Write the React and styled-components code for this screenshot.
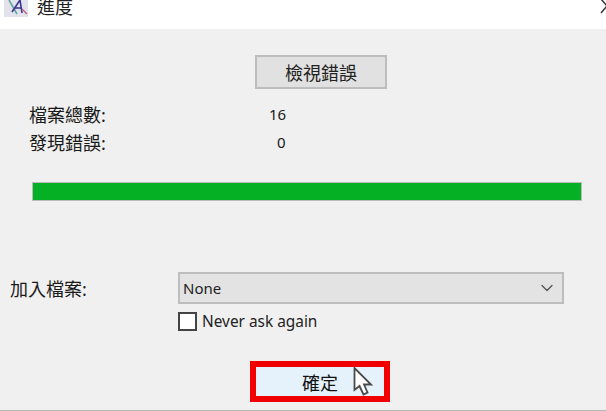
import styled, { createGlobalStyle } from "styled-components";
import { ChevronDown } from "lucide-react";

const GlobalStyle = createGlobalStyle`
  html, body {
    margin: 0;
    padding: 0;
    background: #f0f0f0;
  }
  * {
    box-sizing: border-box;
  }
`;

const stats = [
  { label: "檔案總數:", value: "16", offset: 0 },
  { label: "發現錯誤:", value: "0", offset: 8 },
];

export default function App() {
  return (
    <Dialog>
      <GlobalStyle />
      <TitleBar>
        <AppIcon viewBox="0 0 24 18">
          <rect x="0" y="0" width="24" height="17" fill="#e2e2ec" />
          <path d="M5 0 L13 14" stroke="#5fa898" strokeWidth="1.6" fill="none" />
          <path d="M8 12 L16 0 L18 13 M11 8 L18 8" stroke="#3a3490" strokeWidth="1.6" fill="none" />
          <path d="M18 9 L23 14" stroke="#c0607f" strokeWidth="1.4" fill="none" />
        </AppIcon>
        <Title>進度</Title>
        <CloseIcon viewBox="0 0 6 14">
          <path d="M1 -1 L7 6 L1 13" stroke="#333" strokeWidth="1.5" fill="none" />
        </CloseIcon>
      </TitleBar>

      <Content>
        <ErrorButton>檢視錯誤</ErrorButton>

        <Stats>
          {stats.map((s) => (
            <StatRow key={s.label}>
              <StatLabel>{s.label}</StatLabel>
              <StatValue $offset={s.offset}>{s.value}</StatValue>
            </StatRow>
          ))}
        </Stats>

        <Progress>
          <ProgressFill />
        </Progress>

        <FileRow>
          <FileLabel>加入檔案:</FileLabel>
          <Select>
            <span>None</span>
            <ChevronDown size={20} strokeWidth={1.6} color="#555" />
          </Select>
        </FileRow>

        <CheckRow>
          <CheckBox />
          <CheckLabel>Never ask again</CheckLabel>
        </CheckRow>

        <Footer>
          <Highlight>
            <OkButton>確定</OkButton>
            <Cursor viewBox="0 0 20 29">
              <path
                d="M1.5 1 L1.5 23 L6.5 19 L10.5 27.5 L14.5 25.5 L11 17.5 L18 17.5 Z"
                fill="#fff"
                stroke="#4a4a4a"
                strokeWidth="1.8"
              />
            </Cursor>
          </Highlight>
        </Footer>
      </Content>
      <BottomEdge />
    </Dialog>
  );
}

const Dialog = styled.div`
  width: 606px;
  height: 411px;
  overflow: hidden;
  position: relative;
  background: #f0f0f0;
  color: #1a1a1a;
  font-family: "Noto Sans", "Noto Sans CJK TC", sans-serif;
`;

const TitleBar = styled.div`
  height: 29px;
  background: #fff;
  display: flex;
  align-items: flex-start;
  padding-left: 4px;
`;

const AppIcon = styled.svg`
  width: 24px;
  height: 18px;
  flex: none;
`;

const Title = styled.div`
  margin-left: 9px;
  font-size: 18px;
  line-height: 15px;
  color: #222;
`;

const CloseIcon = styled.svg`
  width: 6px;
  height: 14px;
  margin-left: auto;
  flex: none;
`;

const Content = styled.div`
  display: flex;
  flex-direction: column;
  padding-top: 26px;
`;

const ErrorButton = styled.button`
  align-self: flex-start;
  margin-left: 255px;
  width: 132px;
  height: 34px;
  border: 2px solid #bdbdbd;
  background: #e1e1e1;
  font: inherit;
  font-size: 18px;
  color: #222;
  padding: 0;
`;

const Stats = styled.div`
  display: flex;
  flex-direction: column;
  gap: 8px;
  margin: 15px 0 0 29px;
`;

const StatRow = styled.div`
  display: flex;
  height: 20px;
  align-items: center;
  font-size: 18px;
`;

const StatLabel = styled.div`
  width: 240px;
`;

const StatValue = styled.div`
  margin-left: ${(p) => p.$offset}px;
  font-size: 15px;
`;

const Progress = styled.div`
  margin: 30px 0 0 32px;
  width: 550px;
  height: 19px;
  border: 1px solid #bcbcbc;
  background: #e6e6e6;
`;

const ProgressFill = styled.div`
  width: 100%;
  height: 100%;
  background: #06b025;
`;

const FileRow = styled.div`
  display: flex;
  align-items: center;
  margin: 71px 0 0 10px;
`;

const FileLabel = styled.div`
  width: 168px;
  font-size: 18px;
`;

const Select = styled.div`
  width: 386px;
  height: 32px;
  border: 2px solid #bdbdbd;
  background: #e3e3e3;
  display: flex;
  align-items: center;
  justify-content: space-between;
  padding: 0 5px 0 3px;
  font-size: 15px;
  color: #222;
`;

const CheckRow = styled.div`
  display: flex;
  align-items: center;
  gap: 5px;
  margin: 7px 0 0 178px;
`;

const CheckBox = styled.div`
  width: 19px;
  height: 19px;
  border: 2px solid #444;
  background: #fff;
`;

const CheckLabel = styled.div`
  font-size: 15.4px;
  color: #222;
`;

const Footer = styled.div`
  margin: 29px 0 0 250px;
`;

const Highlight = styled.div`
  position: relative;
  width: 140px;
  height: 41px;
  border: 6px solid #f00000;
  display: flex;
`;

const OkButton = styled.button`
  flex: 1;
  border: none;
  background: #e5f1fb;
  font: inherit;
  font-size: 18px;
  color: #111;
  padding: 0;
`;

const Cursor = styled.svg`
  position: absolute;
  left: 97px;
  top: 0;
  width: 20px;
  height: 29px;
`;

const BottomEdge = styled.div`
  position: absolute;
  left: 0;
  right: 0;
  bottom: 0;
  height: 1px;
  background: #b4b4b4;
`;
